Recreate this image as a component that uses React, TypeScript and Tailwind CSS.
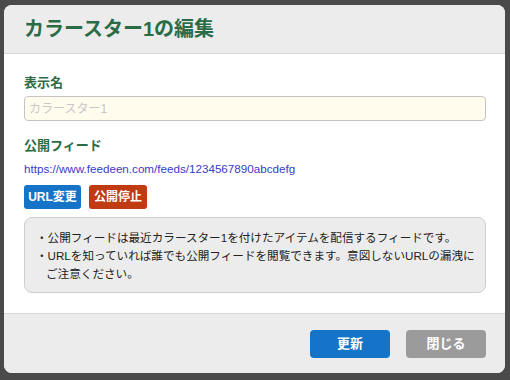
export default function App() {
  return (
    <div
      className="w-[510px] h-[380px] bg-[#4a4a4a] pt-[5px] pl-[4px] overflow-hidden"
      style={{ fontFamily: '"Liberation Sans", "Noto Sans CJK JP", sans-serif' }}
    >
      <div className="w-[501px] h-[368px] bg-white rounded-[8px] overflow-hidden flex flex-col">
        <div className="h-[49px] bg-[#ececec] border-b border-[#d8d8d8] px-[20px] flex items-center">
          <h1 className="text-[20px] font-bold text-[#2b6c47]">カラースター1の編集</h1>
        </div>

        <div className="flex-1 px-[20px] pt-[20px]">
          <label className="block text-[13px] font-bold text-[#2b6c47] leading-[18px]">表示名</label>
          <input
            className="mt-[4px] w-[462px] h-[25px] bg-[#fffcee] border border-[#c4c4c4] rounded-[4px] px-[4px] text-[12px] placeholder:text-[#c8c8c8] outline-none"
            placeholder="カラースター1"
          />

          <h2 className="mt-[16px] text-[13px] font-bold text-[#2b6c47] leading-[18px]">公開フィード</h2>
          <a className="block mt-[6px] text-[11.65px] text-[#3a3ac8] leading-[16px]">
            https://www.feedeen.com/feeds/1234567890abcdefg
          </a>

          <div className="mt-[8px] flex gap-[8px]">
            <button className="h-[24px] w-[57px] rounded-[3px] bg-[#1574c7] text-white text-[12px] font-bold">URL変更</button>
            <button className="h-[24px] w-[58px] rounded-[3px] bg-[#c03a12] text-white text-[12px] font-bold">公開停止</button>
          </div>

          <div className="mt-[8px] w-[462px] bg-[#ececec] border border-[#cfcfcf] rounded-[8px] pl-[11px] pr-[8px] pt-[11px] pb-[9px] text-[11.6px] text-[#222] leading-[18px]">
            <p className="-indent-[10px] pl-[10px]">・公開フィードは最近カラースター1を付けたアイテムを配信するフィードです。</p>
            <p className="-indent-[10px] pl-[10px]">・URLを知っていれば誰でも公開フィードを閲覧できます。意図しないURLの漏洩にご注意ください。</p>
          </div>
        </div>

        <div className="h-[60px] bg-[#ececec] border-t border-[#d8d8d8] flex items-center justify-end gap-[16px] pr-[19px]">
          <button className="w-[80px] h-[28px] rounded-[4px] bg-[#1574c7] text-white text-[13px] font-bold">更新</button>
          <button className="w-[80px] h-[28px] rounded-[4px] bg-[#9b9b9b] text-white text-[13px] font-bold">閉じる</button>
        </div>
      </div>
    </div>
  )
}
